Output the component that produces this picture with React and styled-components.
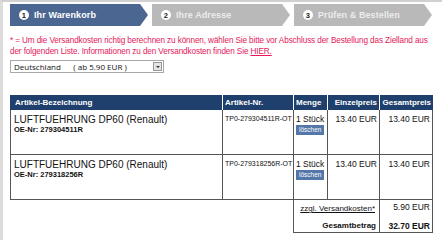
import React from "react";
import styled, { createGlobalStyle } from "styled-components";

const Global = createGlobalStyle`
  html, body { margin: 0; padding: 0; background: #fff; }
  body { font-family: "Liberation Sans", Arial, sans-serif; }
`;

const Page = styled.div`
  width: 442px;
  height: 240px;
  box-sizing: border-box;
  border-top: 2px solid #d0d0d0;
  border-left: 3px solid #dcdcdc;
  padding: 2px 0 0 7px;
  overflow: hidden;
`;

const Steps = styled.div`
  display: flex;
  gap: 4px;
  height: 22px;
`;

const Step = styled.div`
  width: 138px;
  height: 22px;
  box-sizing: border-box;
  display: flex;
  align-items: center;
  gap: 5px;
  padding-left: 9px;
  background: ${(p) => (p.$active ? "#4b6791" : "#b9b9b9")};
  color: ${(p) => (p.$active ? "#ffffff" : "#ececec")};
  clip-path: polygon(0 0, calc(100% - 8px) 0, 100% 50%, calc(100% - 8px) 100%, 0 100%);
  font-size: 9px;
  font-weight: bold;
  letter-spacing: 0.1px;
`;

const Num = styled.span`
  width: 10px;
  height: 10px;
  border-radius: 50%;
  background: #fff;
  color: #222;
  font-size: 7.5px;
  font-weight: bold;
  display: flex;
  align-items: center;
  justify-content: center;
`;

const Notice = styled.p`
  margin: 9px 0 0 0;
  width: 430px;
  color: #e4185a;
  font-size: 8.2px;
  line-height: 11px;
  letter-spacing: -0.12px;
  a { color: #e4185a; text-decoration: underline; }
`;

const Select = styled.div`
  width: 149px;
  height: 11px;
  margin-top: 3px;
  border: 1px solid #a8a8a8;
  display: flex;
  align-items: center;
  justify-content: space-between;
  box-sizing: content-box;
  font-family: "Open Sans", "Liberation Sans", sans-serif;
  font-size: 8px;
  line-height: 11px;
  color: #111;
  padding-left: 3px;
  white-space: pre;
`;

const SelBtn = styled.span`
  width: 9px;
  height: 9px;
  margin-right: 1px;
  background: #e4e4e4;
  border: 1px solid #999;
  box-sizing: border-box;
  display: flex;
  align-items: center;
  justify-content: center;
  &::after {
    content: "";
    border-left: 2px solid transparent;
    border-right: 2px solid transparent;
    border-top: 2px solid #333;
  }
`;

const cols = "212px 71px 34px 52px 54px";

const Cart = styled.div`
  margin-top: 22px;
  width: 423px;
  color: #111;
`;

const HeadRow = styled.div`
  display: grid;
  grid-template-columns: ${cols};
  height: 15px;
  background: #1f3f6d;
`;

const HeadCell = styled.div`
  box-sizing: border-box;
  color: #fff;
  font-size: 8px;
  font-weight: bold;
  line-height: 15px;
  padding: 0 2px;
  text-align: ${(p) => p.$align || "left"};
  border-left: 1px solid #fff;
  white-space: nowrap;
  &:first-child { border-left: none; padding-left: 5px; }
`;

const ItemRow = styled.div`
  display: grid;
  grid-template-columns: ${cols};
  height: 45px;
`;

const Cell = styled.div`
  box-sizing: border-box;
  border-left: 1px solid #555;
  border-bottom: 1px solid #555;
  padding: 4px 2px;
  text-align: ${(p) => p.$align || "left"};
  font-size: ${(p) => p.$size || "8.5px"};
  line-height: 10px;
  white-space: nowrap;
  overflow: hidden;
  &:first-child { padding-left: 3px; }
  &:last-child { border-right: 1px solid #555; }
`;

const Name = styled.div`
  font-size: 10px;
  line-height: 11px;
`;

const Oe = styled.div`
  font-size: 7.5px;
  font-weight: bold;
  line-height: 10px;
`;

const Del = styled.span`
  display: inline-block;
  background: #5477aa;
  color: #fff;
  font-size: 6.5px;
  line-height: 8px;
  padding: 1px 3px;
  margin-top: 1px;
`;

const SumRow = styled.div`
  display: grid;
  grid-template-columns: ${cols};
  height: ${(p) => (p.$last ? "14px" : "19px")};
`;

const SumLabel = styled.div`
  grid-column: 3 / span 2;
  box-sizing: border-box;
  border-left: 1px solid #555;
  border-bottom: ${(p) => (p.$last ? "1px solid #555" : "none")};
  display: flex;
  justify-content: flex-end;
  align-items: ${(p) => (p.$last ? "flex-end" : "flex-start")};
  padding: ${(p) => (p.$last ? "0 3px 1px" : "4px 4px 0")};
  font-size: 8px;
  line-height: 10px;
  font-weight: ${(p) => (p.$last ? "bold" : "normal")};
  white-space: nowrap;
  a { color: #111; text-decoration: underline; }
`;

const SumVal = styled.div`
  box-sizing: border-box;
  border-left: 1px solid #555;
  border-right: 1px solid #555;
  border-bottom: ${(p) => (p.$last ? "1px solid #555" : "none")};
  display: flex;
  justify-content: flex-end;
  align-items: ${(p) => (p.$last ? "flex-end" : "flex-start")};
  padding: ${(p) => (p.$last ? "0 2px 1px" : "2px 2px 0")};
  font-size: 8.5px;
  line-height: 10px;
  font-weight: ${(p) => (p.$last ? "bold" : "normal")};
  white-space: nowrap;
`;

const items = [
  { oe: "279304511R", nr: "TP0-279304511R-OT" },
  { oe: "279318256R", nr: "TP0-279318256R-OT" },
];

export default function App() {
  return (
    <>
      <Global />
      <Page>
        <Steps>
          <Step $active><Num>1</Num>Ihr Warenkorb</Step>
          <Step><Num>2</Num>Ihre Adresse</Step>
          <Step><Num>3</Num>Prüfen &amp; Bestellen</Step>
        </Steps>
        <Notice>
          * = Um die Versandkosten richtig berechnen zu können, wählen Sie bitte vor Abschluss der Bestellung das Zielland aus der folgenden Liste. Informationen zu den Versandkosten finden Sie <a>HIER.</a>
        </Notice>
        <Select>
          {"Deutschland      ( ab 5.90 EUR )"}
          <SelBtn />
        </Select>
        <Cart>
          <HeadRow>
            <HeadCell>Artikel-Bezeichnung</HeadCell>
            <HeadCell>Artikel-Nr.</HeadCell>
            <HeadCell>Menge</HeadCell>
            <HeadCell $align="right">Einzelpreis</HeadCell>
            <HeadCell $align="right">Gesamtpreis</HeadCell>
          </HeadRow>
          {items.map((it) => (
            <ItemRow key={it.oe}>
              <Cell>
                <Name>LUFTFUEHRUNG DP60 (Renault)</Name>
                <Oe>OE-Nr: {it.oe}</Oe>
              </Cell>
              <Cell $size="7px">{it.nr}</Cell>
              <Cell>
                1 Stück
                <br />
                <Del>löschen</Del>
              </Cell>
              <Cell $align="right">13.40 EUR</Cell>
              <Cell $align="right">13.40 EUR</Cell>
            </ItemRow>
          ))}
          <SumRow>
            <SumLabel><a>zzgl. Versandkosten*</a></SumLabel>
            <SumVal>5.90 EUR</SumVal>
          </SumRow>
          <SumRow $last>
            <SumLabel $last>Gesamtbetrag</SumLabel>
            <SumVal $last>32.70 EUR</SumVal>
          </SumRow>
        </Cart>
      </Page>
    </>
  );
}
